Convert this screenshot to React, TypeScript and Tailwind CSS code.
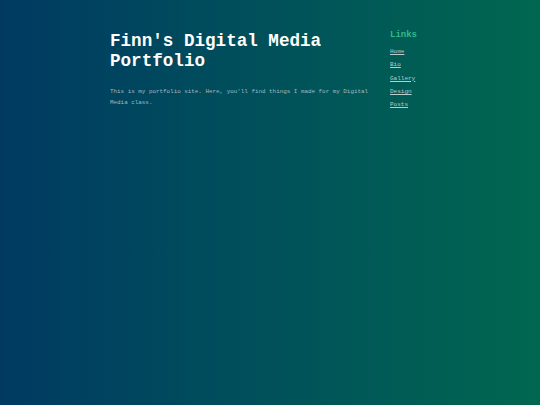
import React from "react";

export default function App() {
  const links = ["Home", "Bio", "Gallery", "Design", "Posts"];
  return (
    <div
      className="min-h-[405px] w-full bg-gradient-to-r from-[#003a62] to-[#00674f]"
      style={{ fontFamily: '"Liberation Mono", "Courier New", monospace' }}
    >
      <div className="mx-auto flex w-[320px] gap-[16px] pt-[30px]">
        <main className="w-[264px] shrink-0 pt-[1px]">
          <h1 className="m-0 text-[17.6px] font-bold leading-[20px] text-white">
            Finn's Digital Media Portfolio
          </h1>
          <p className="mt-[15px] text-[5.9px] leading-[11px] text-[#a3b9c0]">
            This is my portfolio site. Here, you'll find things I made for my Digital Media class.
          </p>
        </main>
        <aside className="w-[40px] shrink-0">
          <h2 className="text-[9px] font-bold leading-[11px] text-[#33b98b]">Links</h2>
          <ul className="mt-[4px]">
            {links.map((l) => (
              <li key={l} className="text-[6px] leading-[13.33px]">
                <a href="#" className="text-[#bccbcb] underline">
                  {l}
                </a>
              </li>
            ))}
          </ul>
        </aside>
      </div>
    </div>
  );
}
